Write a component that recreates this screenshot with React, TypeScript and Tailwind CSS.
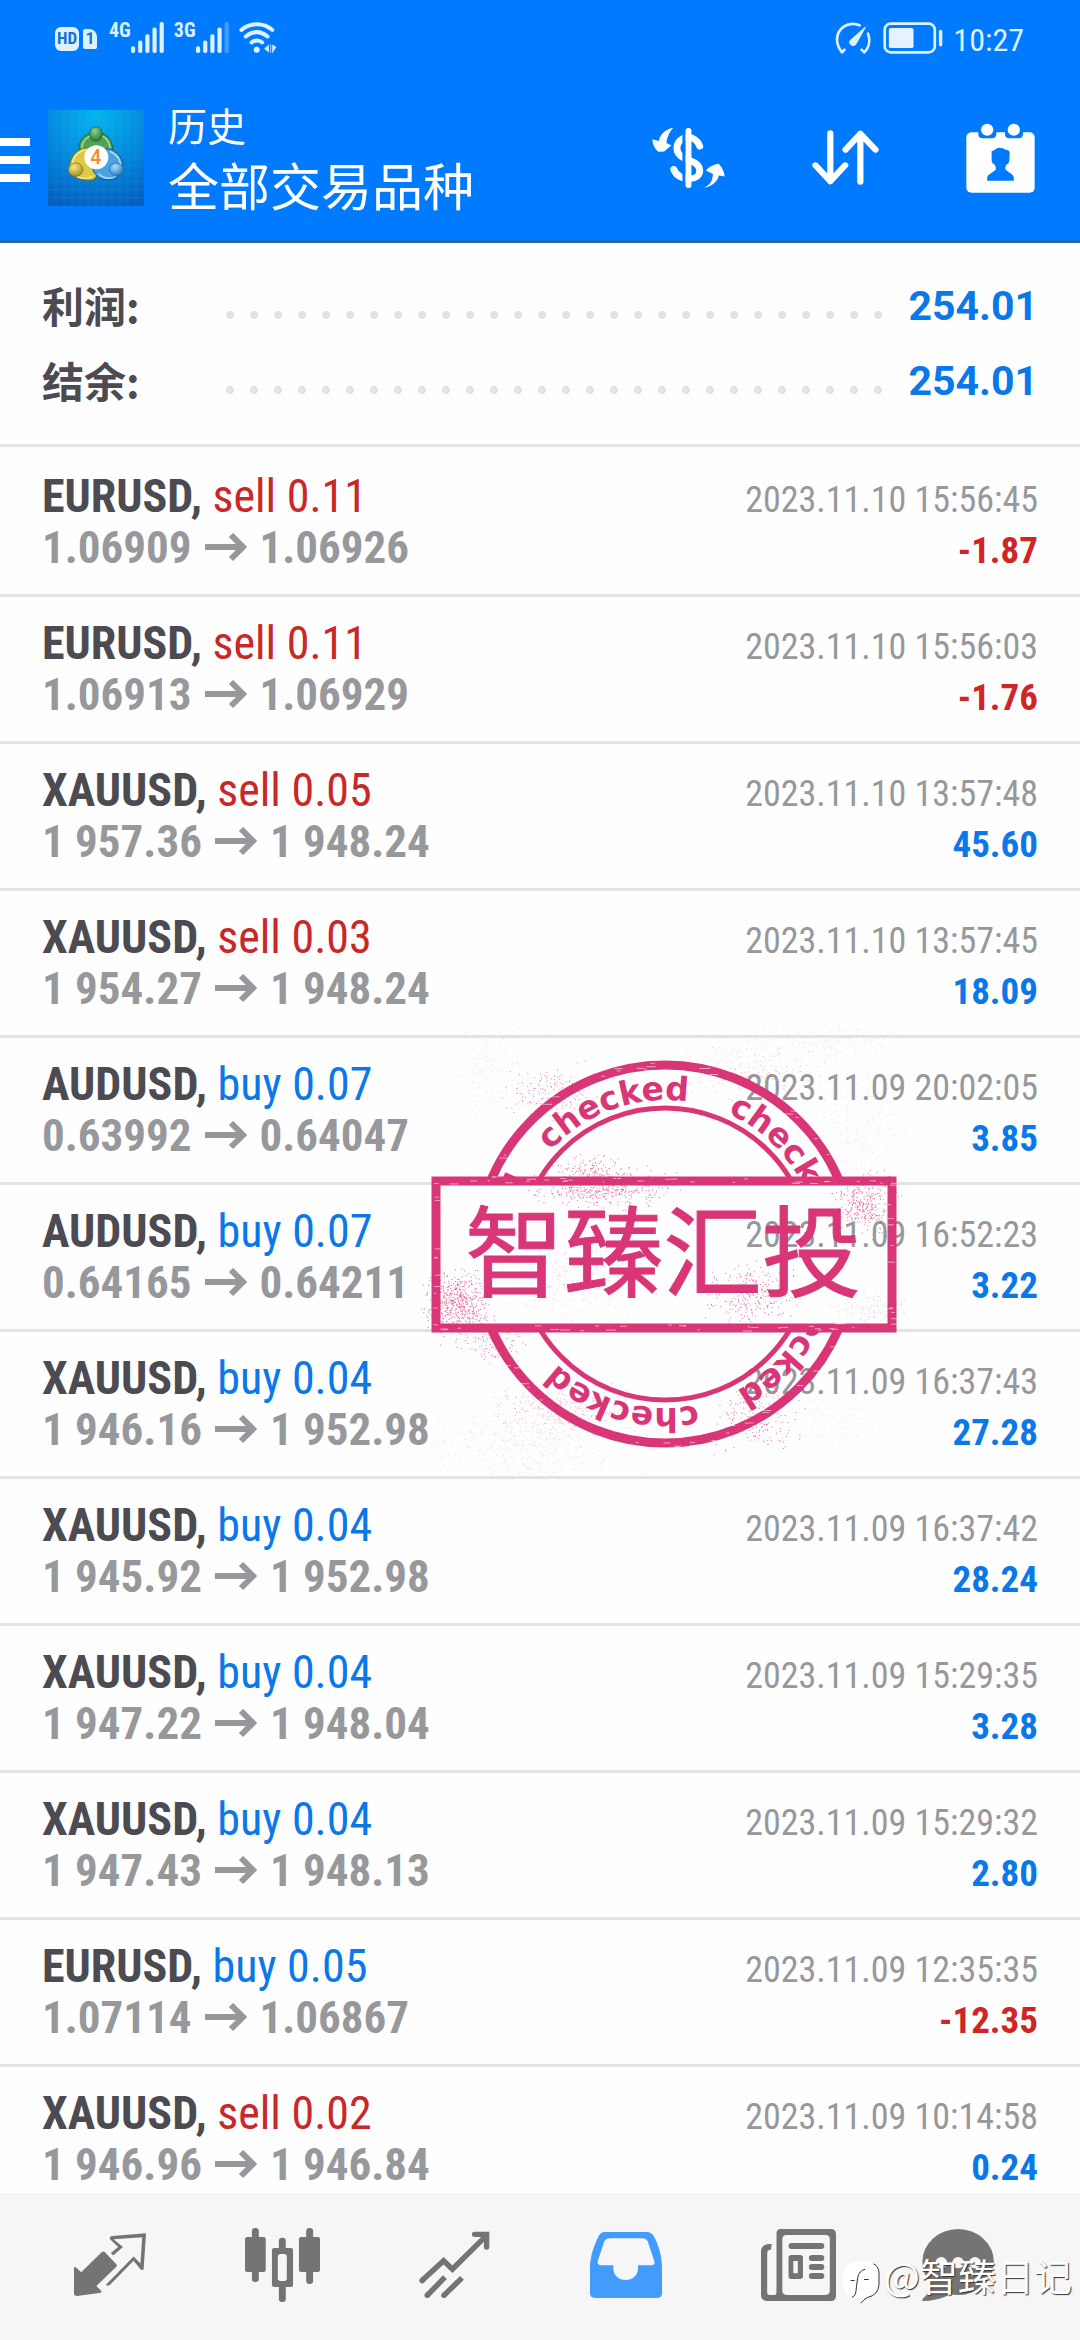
import type { ReactNode } from "react";

type Deal = {
  symbol: string;
  side: "buy" | "sell";
  volume: string;
  open: string;
  close: string;
  time: string;
  profit: string;
};

const deals: Deal[] = [
  { symbol: "EURUSD", side: "sell", volume: "0.11", open: "1.06909", close: "1.06926", time: "2023.11.10 15:56:45", profit: "-1.87" },
  { symbol: "EURUSD", side: "sell", volume: "0.11", open: "1.06913", close: "1.06929", time: "2023.11.10 15:56:03", profit: "-1.76" },
  { symbol: "XAUUSD", side: "sell", volume: "0.05", open: "1 957.36", close: "1 948.24", time: "2023.11.10 13:57:48", profit: "45.60" },
  { symbol: "XAUUSD", side: "sell", volume: "0.03", open: "1 954.27", close: "1 948.24", time: "2023.11.10 13:57:45", profit: "18.09" },
  { symbol: "AUDUSD", side: "buy", volume: "0.07", open: "0.63992", close: "0.64047", time: "2023.11.09 20:02:05", profit: "3.85" },
  { symbol: "AUDUSD", side: "buy", volume: "0.07", open: "0.64165", close: "0.64211", time: "2023.11.09 16:52:23", profit: "3.22" },
  { symbol: "XAUUSD", side: "buy", volume: "0.04", open: "1 946.16", close: "1 952.98", time: "2023.11.09 16:37:43", profit: "27.28" },
  { symbol: "XAUUSD", side: "buy", volume: "0.04", open: "1 945.92", close: "1 952.98", time: "2023.11.09 16:37:42", profit: "28.24" },
  { symbol: "XAUUSD", side: "buy", volume: "0.04", open: "1 947.22", close: "1 948.04", time: "2023.11.09 15:29:35", profit: "3.28" },
  { symbol: "XAUUSD", side: "buy", volume: "0.04", open: "1 947.43", close: "1 948.13", time: "2023.11.09 15:29:32", profit: "2.80" },
  { symbol: "EURUSD", side: "buy", volume: "0.05", open: "1.07114", close: "1.06867", time: "2023.11.09 12:35:35", profit: "-12.35" },
  { symbol: "XAUUSD", side: "sell", volume: "0.02", open: "1 946.96", close: "1 946.84", time: "2023.11.09 10:14:58", profit: "0.24" },
];

const summary = [
  { label: "利润:", value: "254.01" },
  { label: "结余:", value: "254.01" },
];

function Signal({ label, level }: { label: string; level: number }) {
  const tops = [72, 55, 36, 16, 0];
  return (
    <div className="flex items-start">
      <span className="font-['Roboto_Condensed','Liberation_Sans_Narrow',sans-serif] text-xl leading-4 font-bold">{label}</span>
      <svg viewBox="0 0 95 92" preserveAspectRatio="none" className="h-[31px] w-[33px]" fill="currentColor">
        {tops.map((y, i) => (
          <rect key={y} x={i * 20.6} y={y} width="12" height={92 - y} rx="5" opacity={i < level ? 1 : 0.3} />
        ))}
      </svg>
    </div>
  );
}

function StatusBar() {
  return (
    <div className="flex h-[75px] items-center justify-between pr-14 pl-[55px] text-[#def1ff]">
      <div className="flex items-center">
        <span className="mt-0.5 flex h-6 w-6 items-center justify-center rounded-md bg-[#def1ff] font-['Roboto_Condensed','Liberation_Sans_Narrow',sans-serif] text-[17px] font-bold text-[#1273d6]">
          HD
        </span>
        <span className="mt-0.5 mr-3 ml-1 flex h-5 w-3.5 items-center justify-center rounded-xs rounded-tr-lg bg-[#def1ff] font-['Roboto',sans-serif] text-base font-bold text-[#1273d6]">
          1
        </span>
        <Signal label="4G" level={5} />
        <span className="w-2.5" />
        <Signal label="3G" level={4} />
        <svg viewBox="665 65 112 94" preserveAspectRatio="none" className="ml-2.5 h-[31px] w-[38px]" fill="none" stroke="currentColor" strokeWidth="12" strokeLinecap="round">
          <path d="M672 89C698 66 738 66 763 89M685 109C706 92 729 92 749 109M702 127C711 119 725 119 733 127" />
          <circle cx="717" cy="149" r="9" fill="currentColor" stroke="none" />
          <path d="M752 136V156L741 146ZM758 134V158M764 135L774 141L764 157Z" fill="currentColor" strokeWidth="2" />
        </svg>
      </div>
      <div className="flex items-center">
        <svg viewBox="855 64 107 96" preserveAspectRatio="none" className="h-8 w-9" fill="none" stroke="currentColor" strokeWidth="8" strokeLinecap="round" strokeLinejoin="round">
          <path d="M928 74C892 60 861 84 861 118C862 132 868 146 876 155L883 147M953 99C960 118 957 140 942 155L934 147" />
          <path d="M945 80L901 119A9 9 0 1 0 917 130Z" fill="currentColor" strokeWidth="3" />
        </svg>
        <svg viewBox="997 66 175 98" preserveAspectRatio="none" className="ml-3 h-8 w-[60px]" fill="none" stroke="currentColor" strokeWidth="8">
          <rect x="1002" y="71" width="146" height="88" rx="18" />
          <rect x="1014" y="84" width="72" height="62" rx="6" fill="#e8f2ff" stroke="none" />
          <rect x="1160" y="90" width="10" height="51" rx="5" fill="currentColor" stroke="none" />
        </svg>
        <time className="ml-2.5 pt-1 font-['Roboto_Condensed','Liberation_Sans_Narrow',sans-serif] text-[32px] leading-none">10:27</time>
      </div>
    </div>
  );
}

function AppLogo() {
  return (
    <svg viewBox="6 9 288 288" className="h-24 w-24">
      <defs>
        <radialGradient id="sky" cx="0.5" cy="0.05" r="1">
          <stop offset="0" stopColor="#06b4f0" />
          <stop offset="0.55" stopColor="#0487dc" />
          <stop offset="1" stopColor="#0560bd" />
        </radialGradient>
        <radialGradient id="green" cx="0.4" cy="0.3" r="0.8">
          <stop offset="0" stopColor="#8fd08a" />
          <stop offset="1" stopColor="#1c6b33" />
        </radialGradient>
        <radialGradient id="gold" cx="0.4" cy="0.3" r="0.8">
          <stop offset="0" stopColor="#f2ea8c" />
          <stop offset="1" stopColor="#9a8412" />
        </radialGradient>
        <radialGradient id="azure" cx="0.4" cy="0.3" r="0.8">
          <stop offset="0" stopColor="#a5dcfb" />
          <stop offset="1" stopColor="#1f72b8" />
        </radialGradient>
      </defs>
      <rect x="6" y="9" width="288" height="288" fill="url(#sky)" />
      <path
        d="M30 9V297M54 9V297M78 9V297M102 9V297M126 9V297M150 9V297M174 9V297M198 9V297M222 9V297M246 9V297M270 9V297M6 33H294M6 57H294M6 81H294M6 105H294M6 129H294M6 153H294M6 177H294M6 201H294M6 225H294M6 249H294M6 273H294"
        stroke="#5cc8f5"
        strokeOpacity="0.18"
        strokeWidth="1.5"
      />
      <path d="M102 138C92 105 112 78 150 76C190 78 208 112 196 150L184 176L160 130Z" fill="#4fa352" stroke="#1b6a3a" strokeWidth="3" />
      <path d="M109 128C105 105 124 84 150 83C178 84 196 106 190 132" fill="none" stroke="#b5e0a8" strokeWidth="4" />
      <path d="M132 122C98 120 70 145 71 185C76 210 105 222 138 219C152 214 158 200 152 186Z" fill="#dcc945" stroke="#7d6d16" strokeWidth="3" />
      <path d="M118 128C90 136 78 158 79 176M92 209C108 216 128 214 140 208" fill="none" stroke="#f6efaa" strokeWidth="4" />
      <path d="M184 124C216 130 237 158 229 195C220 214 190 223 168 216C152 210 144 198 140 186Z" fill="#4aa3e0" stroke="#14559a" strokeWidth="3" />
      <path d="M192 133C214 144 226 162 223 182M158 200C172 214 192 216 208 210" fill="none" stroke="#b9e2fa" strokeWidth="4" />
      <ellipse cx="150" cy="81" rx="19" ry="22" fill="url(#green)" stroke="#17602f" strokeWidth="2" />
      <ellipse cx="89" cy="188" rx="22" ry="20" fill="url(#gold)" stroke="#7d6d16" strokeWidth="2" />
      <ellipse cx="211" cy="187" rx="21" ry="19" fill="url(#azure)" stroke="#1e64a8" strokeWidth="2" />
      <circle cx="151" cy="151" r="36" fill="#fff" />
      <text x="149" y="172" textAnchor="middle" fontFamily="Roboto, sans-serif" fontSize="58" fontWeight="500" fill="#f28c28">
        4
      </text>
    </svg>
  );
}

function Header() {
  return (
    <header className="border-b-[3px] border-[#1a6bbf] bg-[#007aff] text-white">
      <StatusBar />
      <div className="flex h-[165px] items-center justify-between pr-[45px]">
        <div className="flex items-center">
          <button aria-label="菜单" className="flex flex-col gap-2.5 pt-1">
            <span className="h-2 w-[30px] bg-white" />
            <span className="h-2 w-[30px] bg-white" />
            <span className="h-2 w-[30px] bg-white" />
          </button>
          <div className="mx-[18px]">
            <AppLogo />
          </div>
          <div className="ml-1.5 pb-2 font-['Noto_Sans_CJK_SC',sans-serif]">
            <p className="text-[39px] leading-[60px]">历史</p>
            <h1 className="text-[51px] leading-[60px]">全部交易品种</h1>
          </div>
        </div>
        <div className="flex items-center gap-[87px]">
          <button aria-label="货币">
            <svg viewBox="330 387 211 181" preserveAspectRatio="none" className="h-[60px] w-[73px]">
              <g fill="#fff">
                <path d="M391 387C374 388 352 405 350 426L331 421Q332 445 348 459L365 458L386 440L372 432C373 415 381 398 391 387Z" />
                <path d="M480 567C497 560 505 548 506 526L486 515Q500 498 523 495Q538 512 540 533L523 530C520 550 500 565 480 567Z" />
                <path
                  d="M468 442C462 425 448 415 435 415C415 415 402 430 402 448C402 468 420 478 437 484C458 492 468 502 468 515C468 531 455 540 440 540C415 540 400 530 393 512"
                  fill="none"
                  stroke="#fff"
                  strokeWidth="20"
                  strokeLinecap="round"
                />
              </g>
              <rect x="418" y="387" width="9" height="181" fill="#007aff" />
              <rect x="427" y="387" width="17" height="181" rx="8" fill="#fff" />
            </svg>
          </button>
          <button aria-label="排序">
            <svg viewBox="792 394 194 165" preserveAspectRatio="none" className="h-[55px] w-[67px]" fill="none" stroke="#fff" strokeWidth="18" strokeLinecap="round" strokeLinejoin="round">
              <path d="M845 404V548M802 500L845 548L888 500M932 549V405M889 453L932 405L976 453" />
            </svg>
          </button>
          <button aria-label="日期">
            <svg viewBox="1236 367 202 210" preserveAspectRatio="none" className="h-[70px] w-[69px]">
              <rect x="1237" y="395" width="200" height="181" rx="15" fill="#fff" />
              <path d="M1272 394H1325V400Q1324 413 1312 413H1285Q1272 413 1272 400ZM1350 394H1403V400Q1402 413 1390 413H1363Q1350 413 1350 400Z" fill="#007aff" />
              <circle cx="1298" cy="387" r="18" fill="#fff" />
              <circle cx="1376" cy="387" r="18" fill="#fff" />
              <path
                d="M1311 452Q1322 448 1328 442Q1342 440 1352 447Q1364 448 1364 456L1363 478Q1362 490 1355 491Q1350 500 1351 504C1355 514 1376 518 1376 531V540H1298V531C1300 518 1320 514 1324 504Q1324 498 1319 491Q1312 490 1311 478Z"
                fill="#007aff"
              />
            </svg>
          </button>
        </div>
      </div>
    </header>
  );
}

function Summary() {
  return (
    <dl className="border-b-[3px] border-[#e3e3e3] px-[42px] pt-[26px] pb-[25px]">
      {summary.map((item) => (
        <div key={item.label} className="flex h-[75px] items-center">
          <dt className="w-44 pb-1 font-['Noto_Sans_CJK_SC',sans-serif] text-[42px] leading-none font-bold text-[#4c4b51]">{item.label}</dt>
          <dd className="flex flex-1 items-center">
            <span className="mt-4 h-2 flex-1 bg-[radial-gradient(circle,#e3e3e3_4px,transparent_4px)] bg-size-[24px_8px]" />
            <span className="w-[148px] text-right font-['Roboto',sans-serif] text-[41px] leading-none font-bold text-[#0a78e8]">{item.value}</span>
          </dd>
        </div>
      ))}
    </dl>
  );
}

function DealRow({ deal }: { deal: Deal }) {
  return (
    <li className="h-[147px] border-b-[3px] border-[#e3e3e3] px-[42px] pt-5 font-['Roboto_Condensed','Liberation_Sans_Narrow',sans-serif]">
      <div className="flex h-[52px] items-baseline justify-between text-[46px] leading-[52px]">
        <p>
          <span className="font-bold text-[#4c4b51]">{deal.symbol},</span>{" "}
          <span className={deal.side === "sell" ? "text-[#c82828]" : "text-[#0a78e8]"}>
            {deal.side} {deal.volume}
          </span>
        </p>
        <time className="text-4xl leading-10 text-[#97989c]">{deal.time}</time>
      </div>
      <div className="flex h-[52px] items-baseline justify-between text-[45px] leading-[52px] font-bold">
        <p className="flex items-baseline text-[#97989c]">
          {deal.open}
          <svg viewBox="0 0 42 30" className="mx-[13px] h-[30px] w-[42px]" fill="none" stroke="currentColor" strokeWidth="6">
            <path d="M0 14H38M26 2L38 14L26 26" />
          </svg>
          {deal.close}
        </p>
        <span className={deal.profit.startsWith("-") ? "text-[37px] leading-10 text-[#d02525]" : "text-[37px] leading-10 text-[#0a78e8]"}>
          {deal.profit}
        </span>
      </div>
    </li>
  );
}

// ink specks: [centre x, centre y, spread x, spread y, count, opacity]
const inkClouds = [
  [180, 168, 50, 14, 420, 0.7],
  [175, 150, 30, 12, 120, 0.7],
  [132, 72, 32, 20, 170, 0.6],
  [444, 184, 22, 22, 330, 0.7],
  [38, 284, 24, 26, 560, 0.75],
  [330, 275, 32, 22, 260, 0.7],
  [335, 398, 32, 24, 170, 0.7],
  [74, 325, 20, 14, 110, 0.6],
  [140, 390, 44, 18, 260, 0.4],
  [330, 55, 50, 20, 160, 0.35],
  [440, 100, 44, 44, 300, 0.15],
  [70, 50, 36, 36, 240, 0.15],
  [110, 425, 70, 36, 420, 0.2],
  [410, 400, 46, 28, 220, 0.12],
  [400, 20, 80, 16, 260, 0.15],
  [150, 260, 60, 30, 260, 0.25],
  [450, 290, 30, 16, 130, 0.25],
];

function random(seed: number) {
  let s = seed;
  return () => {
    s = (s * 16807) % 2147483647;
    return s / 2147483647;
  };
}

const clouds = inkClouds.map(([cx, cy, sx, sy, count, opacity], i) => {
  const next = random(i * 977 + 31);
  let d = "";
  for (let n = 0; n < count; n++) {
    const x = cx + (next() + next() + next() - 1.5) * sx * 1.2;
    const y = cy + (next() + next() + next() - 1.5) * sy * 1.2;
    d += `M${x.toFixed(1)} ${y.toFixed(1)}h1v1h-1z`;
  }
  return { d, opacity };
});

// thin horizontal wear marks on the ring and the frame
const scratches = (() => {
  const next = random(4211);
  let d = "";
  for (let n = 0; n < 60; n++) {
    const a = next() * Math.PI * 2;
    const r = 185 + next() * 9;
    d += `M${(245 + Math.cos(a) * r - 3).toFixed(1)} ${(234 + Math.sin(a) * r).toFixed(1)}h${(2 + next() * 8).toFixed(1)}`;
  }
  for (let n = 0; n < 50; n++) {
    d += `M${(14 + next() * 450).toFixed(1)} ${((n % 2 ? 158 : 305) + next() * 6).toFixed(1)}h${(2 + next() * 8).toFixed(1)}`;
  }
  for (let n = 0; n < 24; n++) {
    d += `M${(n % 2 ? 12 : 468) + Math.floor(next() * 4)} ${(160 + next() * 145).toFixed(1)}h${(2 + next() * 5).toFixed(1)}`;
  }
  return d;
})();

function Stamp() {
  return (
    <svg viewBox="0 0 490 460" className="pointer-events-none absolute top-[1020px] left-[420px] h-[460px] w-[490px]" fill="none">
      <defs>
        <clipPath id="outside">
          <path d="M0 0H490V158H0ZM0 311H490V460H0Z" />
        </clipPath>
        <path id="arc" d="M245 80A154 154 0 0 1 245 388A154 154 0 0 1 245 80" />
      </defs>
      <g clipPath="url(#outside)" stroke="#d93677">
        <circle cx="245" cy="234" r="189" strokeWidth="9" />
        <circle cx="245" cy="234" r="146" strokeWidth="5" />
        <g stroke="none" fill="#d93677" fontFamily="'DejaVu Sans', sans-serif" fontSize="33" fontWeight="700">
          {[-48, 24, 96, 168, 242].map((angle) => (
            <text key={angle} transform={`rotate(${angle} 245 234)`}>
              <textPath href="#arc">checked</textPath>
            </text>
          ))}
        </g>
      </g>
      <rect x="16" y="161" width="456" height="147" stroke="#d93677" strokeWidth="9" />
      <path d={scratches} stroke="#fff" strokeOpacity="0.7" strokeWidth="0.8" />
      {clouds.map((cloud, i) => (
        <path key={i} d={cloud.d} fill="#d93677" opacity={cloud.opacity} />
      ))}
      <text x="243" y="269" textAnchor="middle" fill="#d93677" stroke="#d93677" strokeWidth="1" fontFamily="'Noto Sans CJK SC', sans-serif" fontSize="99">
        智臻汇投
      </text>
    </svg>
  );
}

function NavButton({ label, children }: { label: string; children: ReactNode }) {
  return (
    <button aria-label={label} className="flex flex-1 items-center justify-center text-[#747474]">
      {children}
    </button>
  );
}

function BottomNav() {
  return (
    <nav className="flex h-[147px] shrink-0 bg-[#f6f6f6] px-6 pb-1">
      <NavButton label="交易">
        <svg viewBox="215 224 209 190" preserveAspectRatio="none" className="h-[63px] w-[72px]" fill="currentColor">
          <path d="M215 327H220L236 342L296 281Q300 278 304 281L338 318Q341 322 338 326L280 384L295 400L293 404L224 414Q215 414 215 405Z" />
          <path d="M307 381L388 295L408 316L413 237L330 243L357 266L329 292L322 284L343 266L319 242Q318 234 326 233L424 225L417 335H409L388 308L319 381Q313 384 307 381Z" />
        </svg>
      </NavButton>
      <NavButton label="图表">
        <svg viewBox="709 207 217 222" preserveAspectRatio="none" className="h-[74px] w-[75px]" fill="currentColor">
          <rect x="709" y="234" width="60" height="105" rx="6" />
          <rect x="729" y="207" width="20" height="162" rx="9" />
          <rect x="865" y="234" width="61" height="105" rx="6" />
          <rect x="886" y="207" width="20" height="168" rx="9" />
          <rect x="787" y="267" width="61" height="117" rx="6" />
          <rect x="807" y="236" width="20" height="193" rx="9" />
          <rect x="804" y="285" width="26" height="81" rx="8" fill="#f6f6f6" />
        </svg>
      </NavButton>
      <NavButton label="行情">
        <svg viewBox="1213 214 208 200" preserveAspectRatio="none" className="h-[67px] w-[71px]" fill="none" stroke="currentColor" strokeWidth="16">
          <path d="M1222 362L1285 303L1311 328L1408 230" />
          <path d="M1376 224H1411V262" strokeLinecap="round" />
          <path d="M1222 362L1224 360M1237 406L1239 404M1286 406L1288 404" strokeLinecap="round" />
          <path d="M1237 406L1289 352M1286 406L1339 354" />
        </svg>
      </NavButton>
      <NavButton label="历史">
        <svg viewBox="146 215 210 199" preserveAspectRatio="none" className="h-[66px] w-[72px]" fill="#439cfc" fillRule="evenodd">
          <path d="M186 215H315Q324 216 330 224C345 250 356 285 356 325V400Q356 414 343 414H160Q146 414 146 400V320C147 285 158 255 173 224Q178 216 186 215ZM203 234Q192 235 188 242L168 305Q168 314 176 315H214V326A36 34 0 0 0 286 326V315H326Q336 314 334 305L314 242Q310 234 300 234Z" />
        </svg>
      </NavButton>
      <NavButton label="新闻">
        <svg viewBox="646 207 218 216" preserveAspectRatio="none" className="h-[72px] w-[75px]" fill="currentColor" fillRule="evenodd">
          <path d="M704 207H848Q864 207 864 223V407Q864 423 848 423H662Q646 421 646 405V272Q648 253 670 252H677L675 269H671Q664 270 664 278V398Q664 405 671 405H684Q691 405 691 398V221Q691 207 704 207ZM720 225Q708 226 708 237V393Q708 404 720 405H834Q846 404 846 393V237Q846 226 834 225Z" />
          <rect x="726" y="249" width="104" height="18" rx="9" />
          <path d="M734 285H760Q768 285 768 293V349Q768 357 760 357H734Q726 357 726 349V293Q726 285 734 285ZM740 303V340H753V303Z" />
          <rect x="785" y="285" width="45" height="18" rx="9" />
          <rect x="785" y="312" width="45" height="18" rx="9" />
          <rect x="785" y="339" width="45" height="18" rx="9" />
        </svg>
      </NavButton>
      <NavButton label="消息">
        <svg viewBox="1108 207 279 216" preserveAspectRatio="none" className="h-[72px] w-24" fill="currentColor">
          <ellipse cx="1213" cy="306" rx="104" ry="99" />
          <path d="M1120 350C1138 380 1130 398 1110 416Q1106 424 1116 423C1150 421 1180 412 1200 396Z" />
          <g fill="#f6f6f6">
            <circle cx="1164" cy="308" r="17" />
            <circle cx="1213" cy="308" r="17" />
            <circle cx="1262" cy="308" r="17" />
          </g>
        </svg>
      </NavButton>
    </nav>
  );
}

function Watermark() {
  return (
    <div className="pointer-events-none absolute right-2 bottom-9 flex items-start gap-1 text-white">
      <svg viewBox="28 62 114 128" className="h-[43px] w-[38px]">
        <path d="M60 64H112Q140 68 140 98V132Q138 162 110 166Q96 172 86 188Q80 178 82 172H60Q32 164 30 120Q32 74 60 64Z" fill="#fff" />
        <path d="M122 70Q138 76 139 98V132Q137 164 104 171Q94 176 84 188M58 170Q70 168 71 142L75 112Q79 90 98 86M54 120H66M94 117H108" fill="none" stroke="#333" strokeWidth="3" />
      </svg>
      <span className="font-['Noto_Sans_CJK_SC',sans-serif] text-[38px] leading-7 [text-shadow:1px_1px_1px_#333]">@智臻日记</span>
    </div>
  );
}

export default function App() {
  return (
    <div className="relative flex h-screen flex-col overflow-hidden bg-[#fefefe]">
      <Header />
      <main className="min-h-0 flex-1 overflow-y-auto [scrollbar-width:none]">
        <Summary />
        <ul className="pt-[3px]">
          {deals.map((deal) => (
            <DealRow key={deal.time} deal={deal} />
          ))}
        </ul>
      </main>
      <BottomNav />
      <Stamp />
      <Watermark />
    </div>
  );
}
